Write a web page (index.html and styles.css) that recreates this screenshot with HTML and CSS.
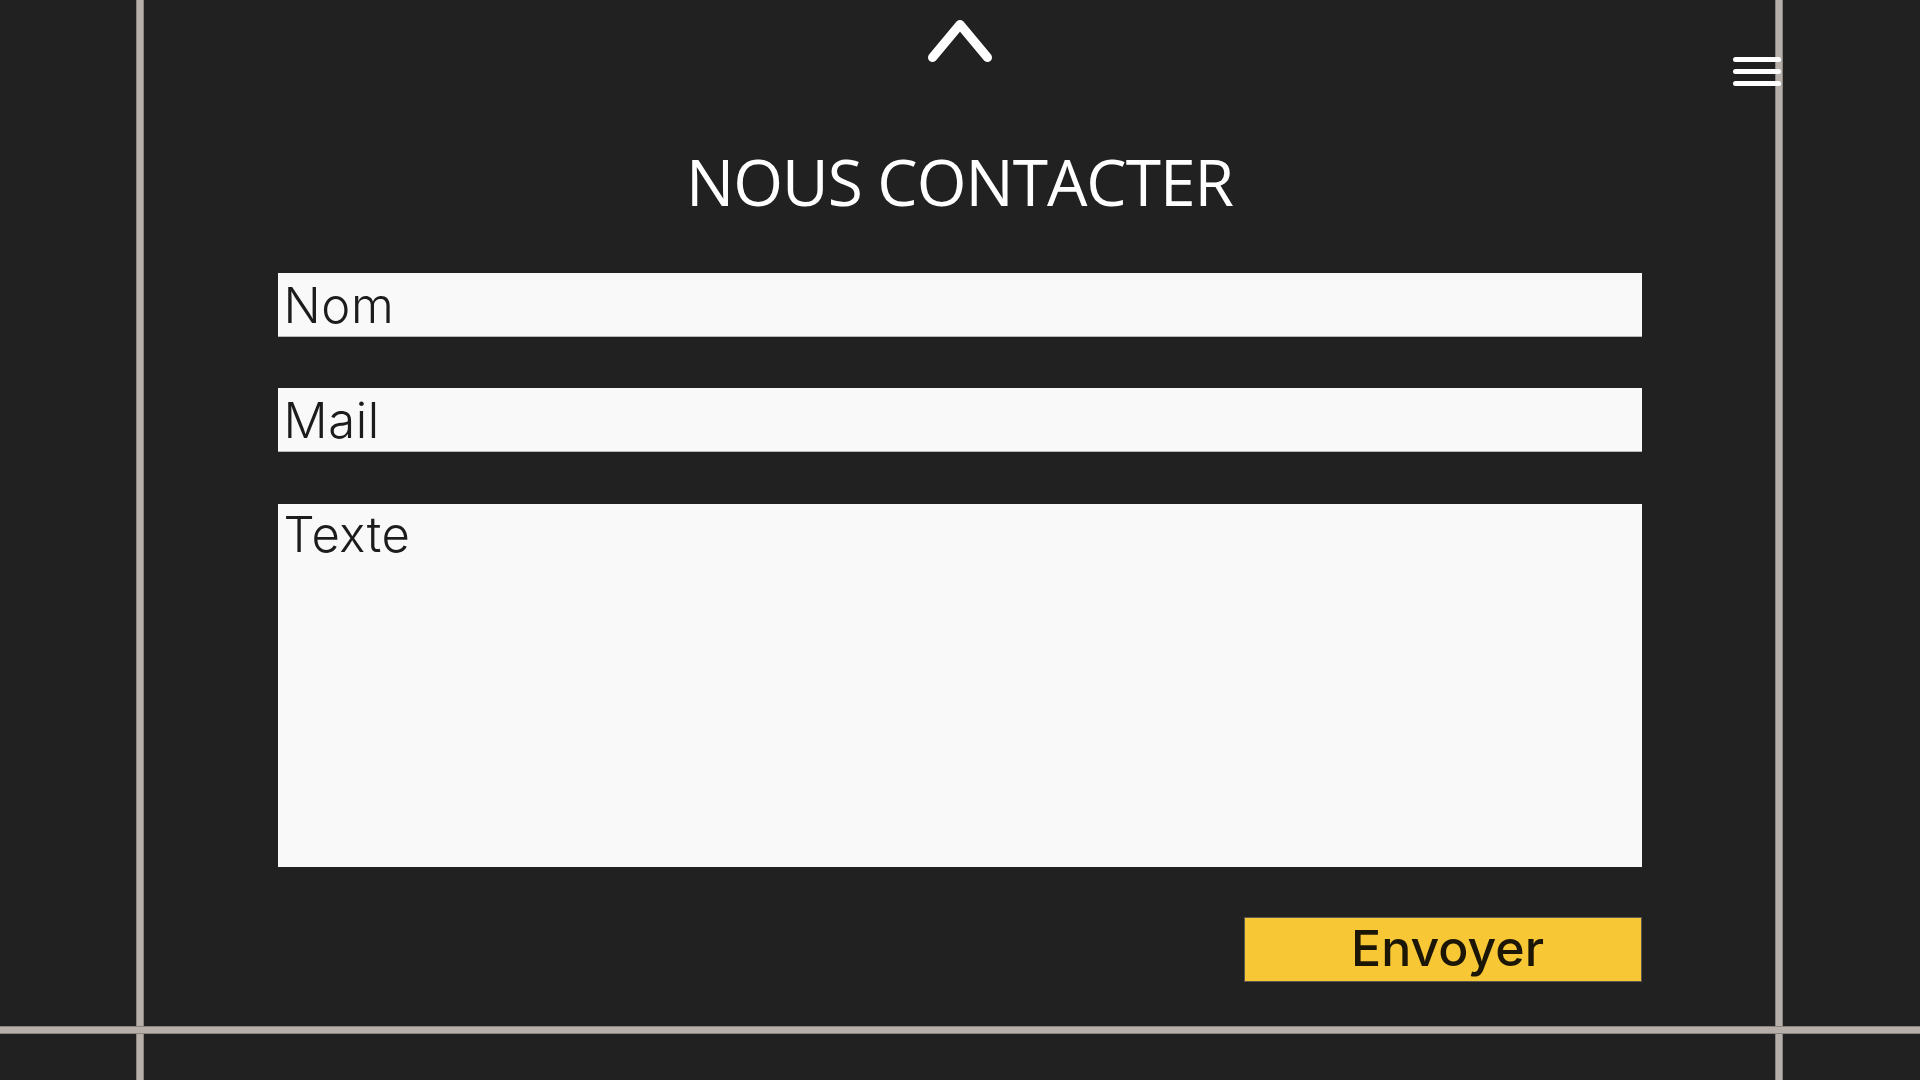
FILE: index.html
```html
<!DOCTYPE html>
<html lang="fr">
<head>
<meta charset="utf-8">
<title>Nous contacter</title>
<link rel="stylesheet" href="styles.css">
</head>
<body>
<div class="page">
  <div class="vline vline-left"></div>
  <div class="vline vline-right"></div>
  <div class="hline"></div>
  <main class="main">
    <a class="up" href="#" aria-label="Haut de page">
      <svg width="76" height="60" viewBox="0 0 76 60"><polyline points="10.5,47.5 38,14.5 65.5,47.5" fill="none" stroke="#fff" stroke-width="9" stroke-linecap="round" stroke-linejoin="round"/></svg>
    </a>
    <button class="burger" aria-label="Menu"><span></span><span></span><span></span></button>
    <h1 class="title">NOUS CONTACTER</h1>
    <form class="form">
      <input class="field" type="text" placeholder="Nom">
      <input class="field" type="email" placeholder="Mail">
      <textarea class="field area" placeholder="Texte"></textarea>
      <button class="send" type="submit">Envoyer</button>
    </form>
  </main>
</div>
</body>
</html>
```

FILE: styles.css
```css
* { box-sizing: border-box; }
html, body { margin: 0; padding: 0; }
body {
  background: #212121;
  width: 1920px;
  height: 1080px;
  overflow: hidden;
}
.page {
  display: grid;
  grid-template-columns: 136px 8px 1631px 8px 137px;
  grid-template-rows: 1026px 8px 46px;
  height: 1080px;
}
.vline {
  background: #b6aea9;
  box-shadow: inset 1px 0 0 #8a8580, inset -1px 0 0 #8a8580;
  grid-row: 1 / 4;
  z-index: 0;
}
.vline-left { grid-column: 2; }
.vline-right { grid-column: 4; }
.hline {
  grid-row: 2;
  grid-column: 1 / 6;
  background: #b6aea9;
  box-shadow: inset 0 1px 0 #8a8580, inset 0 -1px 0 #8a8580;
  z-index: 0;
}
.main {
  grid-row: 1;
  grid-column: 3;
  position: relative;
  z-index: 1;
  display: flex;
  flex-direction: column;
  align-items: center;
  padding-top: 10px;
}
.up { display: block; width: 76px; height: 60px; }
.up svg { display: block; }
.burger {
  position: absolute;
  top: 57px;
  right: -6px;
  width: 48px;
  padding: 0;
  border: 0;
  background: none;
  display: flex;
  flex-direction: column;
  gap: 7px;
}
.burger span {
  display: block;
  height: 5px;
  width: 48px;
  background: #fff;
  border-radius: 2.5px;
}
.title {
  margin: 80px 0 0;
  font-family: "Open Sans", "Noto Sans", sans-serif;
  font-weight: 400;
  font-size: 64px;
  line-height: 64px;
  color: #fff;
  letter-spacing: -1px;
}
.form {
  width: 1364px;
  margin-top: 59px;
  display: flex;
  flex-direction: column;
}
.field {
  display: block;
  width: 100%;
  height: 64px;
  border: 0;
  border-radius: 0;
  background: #f9f9f9;
  box-shadow: inset 0 -1px 0 #b9b9b9;
  padding: 0 6px;
  font-family: Inter, Lato, sans-serif;
  font-weight: 300;
  font-size: 49px;
  letter-spacing: 0.6px;
  color: #1c1c1c;
  outline: none;
}
.field + .field { margin-top: 51px; }
.field::placeholder { color: #1c1c1c; opacity: 1; }
.area {
  height: 363px;
  margin-top: 52px !important;
  padding-top: 2px;
  resize: none;
  line-height: 1.2;
  box-shadow: none;
}
.send {
  align-self: flex-end;
  margin-top: 50px;
  width: 398px;
  height: 65px;
  background: #f7c735;
  border: 1px solid #5a5650;
  border-radius: 0;
  font-family: Inter, Lato, sans-serif;
  font-weight: 500;
  font-size: 50px;
  color: #1c1606;
  padding: 0 0 6px 10px;
  cursor: pointer;
}
```
